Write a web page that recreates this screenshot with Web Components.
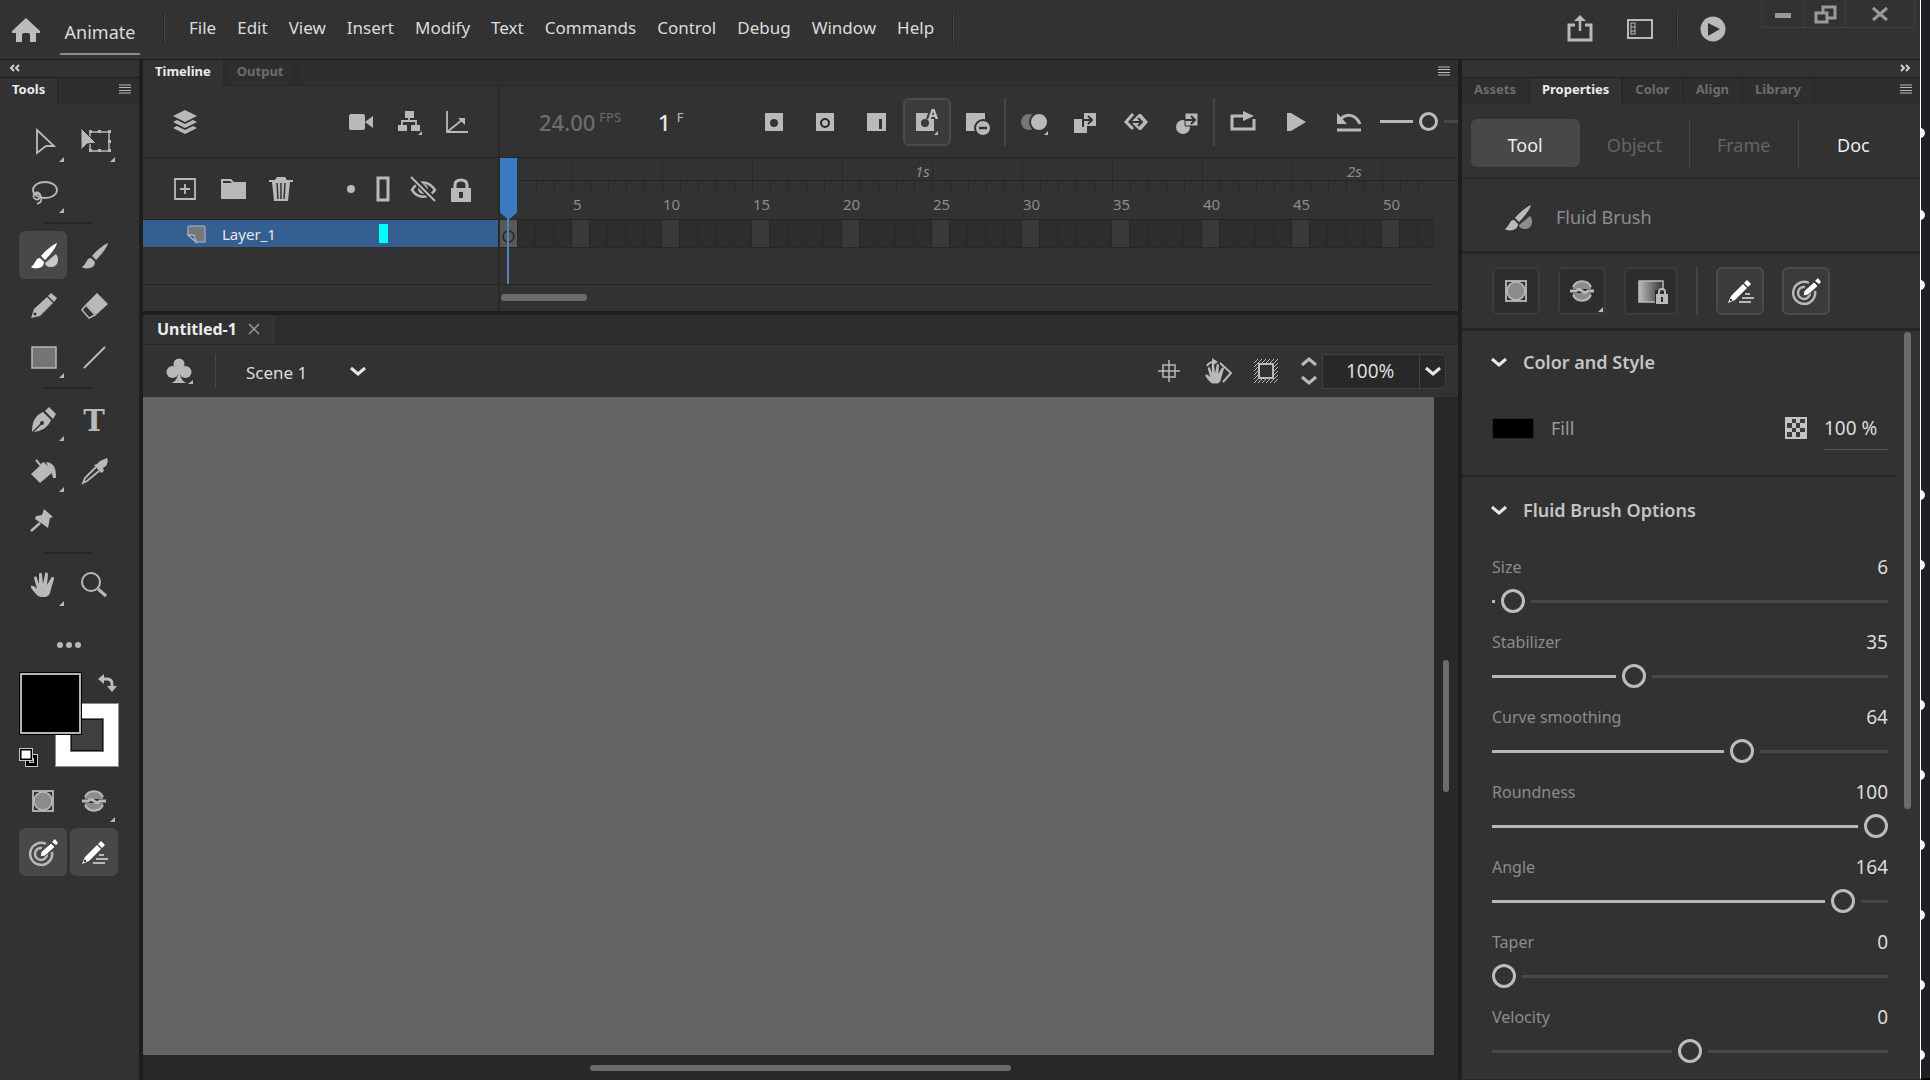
<!DOCTYPE html>
<html lang="en">
<head>
<meta charset="utf-8">
<title>Animate</title>
<style>
  html, body { height: 100%; }
  body {
    margin: 0;
    padding-bottom: 10px;
    box-sizing: border-box;
    background: #fff;
    color: #dcdcdc;
    font-family: "Noto Sans", "Open Sans", sans-serif;
    font-size: 17px;
    --panel: #323232;
    --tabs: #2e2e2e;
    --line: #262626;
    --gap: #1e1e1e;
    --icon: #b9b9b9;
  }
</style>
</head>
<body>
<animate-app></animate-app>

<script>
// Base styles that every shadow root needs
const BASE = `
  * { box-sizing: border-box; }
  button, input, select {
    font: inherit; color: inherit; background: none; border: 0; margin: 0; padding: 0;
    appearance: none; -webkit-appearance: none; outline: none;
  }
  button { cursor: pointer; display: flex; align-items: center; justify-content: center; }
`;

const MORE = '<path d="M21 16V21H16Z"/>';
const BRUSH = '<path d="M14-12C9-10 1-3-2 1L2 5C6 1 13-7 14-12Z"/><path d="M-3 3C-8 3-7 9-12 12-11 14 1 15 1 7Z"/>';
const PENCIL = '<path d="M-12 12-9 3 4-9 10-3-3 10Z"/><path d="M5-10 8-13 14-8 11-4Z"/>';

// Every icon is drawn round the point 0,0
const ICONS = {
  home: '<path d="M0-12 14 1V3H10V12H4V5Q4 3 2 3H-2Q-4 3-4 5V12H-10V3H-14V1Z"/>',
  share: '<path class="s" stroke-width="3" d="M-5-4H-11V11H11V-4H5"/><path class="s" stroke-width="2.500" d="M0 2V-9"/><path d="M-6-8 0-14 6-8Z"/>',
  workspace: '<rect class="s" stroke-width="2" x="-12" y="-9" width="24" height="18"/><rect class="s" x="-9" y="-6" width="4" height="11"/><path class="s" d="M-9-2H-5M-9 2H-5"/>',
  playCircle: '<path fill-rule="evenodd" d="M0-12.500A12.500 12.500 0 1 1 0 12.500 12.500 12.500 0 1 1 0-12.500ZM-5-6V7L7 0Z"/>',
  minimise: '<rect x="-8" y="-1" width="16" height="5"/>',
  restore: '<g class="s" stroke-width="3"><rect x="-9" y="-1" width="11" height="9"/><path d="M-2-2V-7H10V4H3"/></g>',
  closeWin: '<path class="s" stroke-width="3" d="M-7-6 7 6M7-6-7 6"/>',
  left: '<path class="s" stroke-width="2" d="M-1-3-4 0-1 3M4-3 1 0 4 3"/>',
  right: '<path class="s" stroke-width="2" d="M-4-3-1 0-4 3M1-3 4 0 1 3"/>',
  menu: '<path class="s" d="M-6-4H6M-6-1.500H6M-6 1.500H6M-6 4H6"/>',
  select: '<path class="s" stroke-width="1.800" d="M-6-11 11 5H3L-6 12Z"/>' + MORE,
  transform: '<g class="s" stroke-width="1.500"><path d="M-4-9H15V10H-4Z"/></g><path d="M-13-13V9L-7 3 2 2Z" stroke="#323232"/><path d="M-5 8h3v3h-3zM4 8h3v3H4zM14 8h3v3h-3zM14-1h3v3h-3zM14-11h3v3h-3zM4-11h3v3H4zM-5-11h3v3h-3z"/>' + MORE,
  lasso: '<g class="s" stroke-width="1.800"><ellipse cx="2" cy="-2" rx="12" ry="8"/><circle cx="-6" cy="4" r="3.500"/><path d="M-8 3Q-4 0-2 5T-6 12"/></g>' + MORE,
  fluid: '<g fill="#fff">' + BRUSH + '</g><path fill="#c8c8c8" d="M13-1C17 4 15 12 8 12 4 12 2 10 2 8Z"/>',
  fluidDim: BRUSH + '<path fill="#8c8c8c" d="M13-1C17 4 15 12 8 12 4 12 2 10 2 8Z"/>',
  brush: BRUSH,
  pencil: PENCIL + '<circle cx="-8" cy="8" r="1.500" fill="#323232"/>',
  eraser: '<path d="M3-13 14-2 2 9-8-2Z"/><path class="s" stroke-width="1.500" d="M-8-1-12 4-5 12 1 9Z"/>',
  rect: '<rect x="-11" y="-10" width="24" height="21" fill="#757575" stroke="currentColor" stroke-width="1.500"/>' + MORE,
  line: '<path class="s" stroke-width="2" d="M-10 11 11-10"/>',
  pen: '<path d="M-11 12C-11 3-9-4 0-8L8 0C5 8-2 11-9 12Z"/><path fill="none" stroke="#323232" stroke-width="1.500" d="M-11 13-2 4"/><circle cx="-1" cy="3" r="2" fill="#323232"/><path d="M2-9 6-13 13-6 10-1Z"/>' + MORE,
  type: '<text x="0" y="11" text-anchor="middle" font-family="DejaVu Serif" font-weight="bold" font-size="29">T</text>',
  bucket: '<path d="M-12 3 1-9 10 1-3 12Z"/><path class="s" stroke-width="2" d="M-7-11-1-4M-1-8 4-4"/><path d="M3-9C12-8 13-2 13 7H10C9 2 8 0 6-2Z"/>' + MORE,
  dropper: '<path d="M3-7 6-10 13-13Q15-10 12-5L9-3 10 0 7 2 0-6Z"/><path class="s" stroke-width="1.800" d="M2-4-9 7-11 12-7 10 5 0"/>',
  pin: '<path d="M1-13 10-5 7-4 5 6 1 3-8-3-7-6-1-7Z"/><path class="s" stroke-width="2.500" d="M-3 1-12 9"/>',
  hand: '<path d="M-5 11C-7 9-13 3-12 1-11 0-8 1-6 4L-9-7C-9-9-6-9-6-7L-4-1-4-10C-4-13-1-13-1-10L0-1 2-11C2-13 5-13 5-10L4 0 8-7C9-9 12-8 11-6L8 4C7 10 5 12 1 12-2 12-3 12-5 11Z"/>',
  zoom: '<circle class="s" stroke-width="2" cx="-3" cy="-3" r="9"/><path class="s" stroke-width="3" d="M4 4 12 11"/>',
  dots: '<circle cx="-9" r="3"/><circle r="3"/><circle cx="9" r="3"/>',
  swap: '<path class="s" stroke-width="3" d="M-5-4H-1Q4-4 4 1V4"/><path d="M-10-4-4-9V1Z"/><path d="M-1 3H9L4 9Z"/>',
  reset: '<rect x="-3" y="-3" width="12" height="12" fill="#000" stroke="#c8c8c8"/><rect x="1" y="1" width="4" height="4" fill="#323232" stroke="#c8c8c8"/><rect x="-9" y="-9" width="13" height="12" fill="#000" stroke="#c8c8c8"/><rect x="-7" y="-7" width="9" height="8" fill="#fff"/>',
  object: '<rect class="s" stroke-width="1.800" x="-10" y="-10" width="20" height="20"/><circle r="9" fill="#8c8c8c" stroke="currentColor" stroke-width="1.500"/>',
  paint: '<path fill="#8c8c8c" d="M-9-4A10 10 0 0 1 9-4L9-2H-9ZM-9 4A10 10 0 0 0 9 4V2H-9Z"/><path class="s" stroke-width="2" d="M-9-4A10 10 0 0 1 9-4M-9 4A10 10 0 0 0 9 4"/><path class="s" stroke-width="3" d="M-12 0H-6Q-3-3 0 0T6 0H12"/>' + MORE,
  gradient: '<defs><linearGradient id="g"><stop offset="0" stop-color="#bbb"/><stop offset="1" stop-color="#333"/></linearGradient></defs><rect x="-12" y="-10" width="24" height="21" fill="url(#g)" stroke="currentColor" stroke-width="1.500"/><rect x="4" y="-1" width="14" height="15" fill="#2c2c2c"/><rect x="5" y="3" width="12" height="10"/><path class="s" stroke-width="2" d="M8 4V1Q8-2 11-2T14 1V4"/><path fill="#2c2c2c" d="M10 6h2v5h-2z"/>',
  stroke: '<path fill="#fff" d="M-12 12-9 5 3-7 7-3-5 9Z"/><path fill="#fff" d="M4-8 7-11 11-7 8-4Z"/><circle cx="-9" cy="9" r="1.200" fill="#3c3c3c"/><path class="s" stroke-width="2" d="M5 3H10M2 7H14M-1 11H11"/>',
  target: '<g class="s" stroke-width="2.500"><path d="M3-8A11 11 0 1 0 9 0"/><path d="M-1-4A6 6 0 1 0 4 2"/></g><path fill="#fff" stroke="#444" d="M-3 5-2 0 8-9 12-5 2 4Z"/><path fill="#fff" d="M9-10 12-13 15-9 13-7Z"/>',
  layers: '<path d="M0-12 12-6 0 0-12-6ZM-12 0-8-2 0 2 8-2 12 0 0 6ZM-12 6-8 4 0 8 8 4 12 6 0 12Z"/>',
  camera: '<rect x="-12" y="-8" width="16" height="16" rx="2"/><path d="M4 0 12-6V6Z"/>',
  tree: '<path d="M-4-11h9v7h-9zM-11 3h9v6h-9zM2 3h9v6H2z"/><path class="s" stroke-width="1.800" d="M0-5V-1M-7 3V-1H7V3"/><path d="M13 9V13H9Z"/>',
  graph: '<path class="s" stroke-width="1.800" d="M-10-11V10H11M-10 10 5-2"/><path d="M1-4H8V3Z"/>',
  key: '<path fill-rule="evenodd" d="M-9-9H9V9H-9ZM0-3A4 4 0 1 0 0 5 4 4 0 1 0 0-3Z"/>',
  blank: '<rect x="-9" y="-9" width="18" height="18"/><circle cy="1" r="4" fill="none" stroke="#262626" stroke-width="2"/>',
  frame: '<path fill-rule="evenodd" d="M-9-9H10V9H-9ZM3-3V7H6V-3Z"/>',
  auto: '<path fill-rule="evenodd" d="M-11-9H1L-1-3H7V9H-11ZM-2-3A4 4 0 1 0-2 5 4 4 0 1 0-2-3Z"/><text x="6" y="-3" text-anchor="middle" font-size="14" font-weight="bold" fill="#c8c8c8">A</text><path d="M11 9V13H7Z"/>',
  remove: '<rect x="-12" y="-9" width="19" height="18"/><circle cx="5" cy="6" r="8" stroke="#323232" stroke-width="2"/><path stroke="#323232" stroke-width="2.500" d="M1 6H9"/>',
  onion: '<circle cx="-5" r="8" fill="#777"/><circle cx="5" r="9" stroke="#323232" stroke-width="2"/><path d="M14 9V13H10Z"/>',
  tween: '<path d="M-11-3H-3V4H2V11H-11Z"/><path d="M-2-9H11V4H-2Z"/><path stroke="#323232" stroke-width="2" fill="none" d="M-2-9V4H-3M-3-2H6M3-6 7-2 3 2"/>',
  motion: '<path class="s" stroke-width="3" d="M-3-8-10 0-3 7"/><path d="M-5 0 3-8H5L12 0 5 8H3Z"/><path fill="none" stroke="#323232" stroke-width="2" d="M-5 0H5M2-4 6 0 2 4"/>',
  shape: '<circle cx="-4" cy="5" r="7"/><path d="M-2-9H11V4H-2Z" stroke="#323232"/><path stroke="#323232" stroke-width="2" fill="none" d="M-2-2H7M4-6 8-2 4 2"/>',
  loop: '<path class="s" stroke-width="3" d="M1-6H-11V7H11V-3"/><path d="M0-11 11-6 0-1Z"/>',
  play: '<path d="M-9-9H-5L10 0-5 9H-9Z"/>',
  undo: '<path class="s" stroke-width="3" d="M-10-1C-4-9 6-9 11 2"/><path d="M-12-9V2H-2Z"/><path class="s" stroke-width="3" d="M-12 8H12"/>',
  addLayer: '<path class="s" stroke-width="1.800" d="M-10-10H10V10H-10ZM0-5V5M-5 0H5"/>',
  folder: '<path d="M-12-10H-2L1-7H13V10H-12ZM-10-6H-1L-3-8H-10Z" fill-rule="evenodd"/>',
  trash: '<path fill-rule="evenodd" d="M-4-12H4L6-9H12V-7H9L7 12H-7L-9-7H-12V-9H-6Z"/><path stroke="#323232" stroke-width="1.500" fill="none" d="M-4-6-3 10M0-6V10M4-6 3 10"/>',
  dot: '<circle r="4"/>',
  outline: '<rect class="s" stroke-width="3" x="-5" y="-11" width="10" height="22"/>',
  eye: '<path class="s" stroke-width="2.500" d="M-11 1C-5-9 5-9 12 1 5 10-5 10-11 1Z"/><circle r="5"/><path stroke="#323232" stroke-width="6" d="M-10-11 12 12"/><path class="s" stroke-width="2" d="M-12-12 12 12"/>',
  lock: '<path fill-rule="evenodd" d="M-10-1H10V13H-10ZM-2 3V9H2V3Z"/><path class="s" stroke-width="3" d="M-6 0V-4Q-6-9 0-9T6-4V0"/>',
  layer: '<path fill="#777" stroke="#8fa3bb" stroke-width="1.500" d="M-6-8H7Q9-8 9-6V8H0L-8 1V-6Q-8-8-6-8Z"/><path fill="#365f91" stroke="#9fb0c4" stroke-width="1.500" d="M-8 1H-2L0 8Z"/>',
  close: '<path class="s" stroke-width="1.500" d="M-5-5 5 5M5-5-5 5"/>',
  club: '<circle cy="-7" r="5.500"/><circle cx="-6.500" cy="1" r="6"/><circle cx="6.500" cy="1" r="6"/><path d="M-3-4H3L4 3H1C2 8 4 11 8 12H-8C-4 11-2 8-1 3H-4Z"/><path d="M14 9V13H9Z"/>',
  centre: '<path class="s" stroke-width="1.500" d="M-6-6H6V6H-6ZM0-11V11M-11 0H11"/>',
  rotate: '<g transform="translate(-3 3) scale(.8)"><path d="M-5 11C-7 9-13 3-12 1-11 0-8 1-6 4L-9-7C-9-9-6-9-6-7L-4-1-4-10C-4-13-1-13-1-10L0-1 2-11C2-13 5-13 5-10L4 0 8-7C9-9 12-8 11-6L8 4C7 10 5 12 1 12-2 12-3 12-5 11Z"/></g><path class="s" stroke-width="2" d="M2-8 13 2 5 11M-11-5Q-9-9-4-9"/><path d="M-6-13 0-9-6-5Z"/>',
  clip: '<g class="s"><path d="M-12-8-8-12M-12-4-4-12M-12 0 0-12M-12 4-8 0M-12 8-8 4M-12 12-8 8M-8 12-4 8M-4 12 0 8M0 12 12 0M4 12 12 4M8 12 12 8M0-8 4-12M4-8 8-12M8-8 12-12M8-4 12-8M8 0 12-4M8 4 12 0"/></g><rect x="-7" y="-7" width="14" height="14" fill="#323232" stroke="currentColor" stroke-width="2"/>',
  stepper: '<path class="s" stroke-width="3" d="M-7-6 0-12 7-6M-7 6 0 12 7 6"/>',
  chevron: '<path fill="none" stroke="#e6e6e6" stroke-width="3" d="M-7-3 0 3 7-3"/>',
  alpha: '<path fill="#c4c4c4" d="M-11-11H11V11H-11Z"/><path fill="#3c3c3c" d="M-4-9h4v4h-4zM4-9h5v4H4zM-9-5h5v5h-5zM0-5h4v5H0zM-4 0h4v4h-4zM4 0h5v4H4zM-9 4h5v5h-5zM0 4h4v5H0z"/>'
};
ICONS.handTool = ICONS.hand + MORE;

class SvgIcon extends HTMLElement {
  connectedCallback() {
    const size = Number(this.getAttribute('size') || 24);
    if (!this.shadowRoot) this.attachShadow({ mode: 'open' });
    this.shadowRoot.innerHTML = `
      <style>
        :host { display: block; flex: none; width: ${size}px; height: ${size}px; }
        svg { display: block; overflow: visible; fill: currentColor; }
        .s { fill: none; stroke: currentColor; }
      </style>
      <svg width="${size}" height="${size}" viewBox="${-size / 2} ${-size / 2} ${size} ${size}" aria-hidden="true">${ICONS[this.getAttribute('name')]}</svg>
    `;
  }
}
customElements.define('svg-icon', SvgIcon);

// A square icon button. kind: empty, "on" (filled) or "boxed" / "boxed on" (with a frame)
class ToolButton extends HTMLElement {
  constructor() {
    super();
    this.attachShadow({ mode: 'open' });
  }
  connectedCallback() {
    const icon = this.getAttribute('icon');
    this.shadowRoot.innerHTML = `
      <style>
        ${BASE}
        :host { display: block; flex: none; width: var(--w, 48px); height: var(--h, 48px); color: var(--icon); }
        button { width: 100%; height: 100%; border-radius: 6px; }
        :host([kind~="on"]) button { background: #484848; }
        :host([kind~="boxed"]) button { border: 2px solid #3c3c3c; background: #2d2d2d; }
        :host([kind="boxed on"]) button { border-color: #4b4b4b; background: #3b3b3b; }
      </style>
      <button type="button" aria-label="${icon}"><svg-icon name="${icon}"></svg-icon></button>
    `;
  }
}
customElements.define('tool-button', ToolButton);

class PanelTabs extends HTMLElement {
  constructor() {
    super();
    this.attachShadow({ mode: 'open' });
  }
  connectedCallback() {
    const active = this.getAttribute('active');
    const tabs = this.getAttribute('tabs').split(',');
    this.shadowRoot.innerHTML = `
      <style>
        ${BASE}
        :host { display: flex; height: 26px; background: var(--tabs); font-size: 13px; font-weight: bold; color: #6c6c6c; }
        .tab { padding: 0 12px 4px; border-right: 2px solid #292929; border-bottom: 1px solid #292929; line-height: 20px; }
        .tab.active { background: var(--panel); color: #ececec; border-bottom-color: var(--panel); }
        .rest { flex: 1; display: flex; justify-content: flex-end; padding: 0 6px 3px; border-bottom: 1px solid #292929; color: var(--icon); }
      </style>
      ${tabs.map(t => `<button type="button" class="tab ${t === active ? 'active' : ''}">${t}</button>`).join('')}
      <div class="rest"><button type="button" aria-label="Panel menu"><svg-icon name="menu" size="16"></svg-icon></button></div>
    `;
  }
}
customElements.define('panel-tabs', PanelTabs);

class CollapseBar extends HTMLElement {
  constructor() {
    super();
    this.attachShadow({ mode: 'open' });
  }
  connectedCallback() {
    this.shadowRoot.innerHTML = `
      <style>
        ${BASE}
        :host { display: flex; height: 18px; padding: 0 7px 2px; border-bottom: 1px solid var(--gap); box-sizing: border-box; color: #d0d0d0; }
        :host([side="right"]) { justify-content: flex-end; }
      </style>
      <button type="button" aria-label="Collapse"><svg-icon size="16" name="${this.getAttribute('side') || 'left'}"></svg-icon></button>
    `;
  }
}
customElements.define('collapse-bar', CollapseBar);

class AppHeader extends HTMLElement {
  constructor() {
    super();
    const menus = ['File', 'Edit', 'View', 'Insert', 'Modify', 'Text', 'Commands', 'Control', 'Debug', 'Window', 'Help'];
    this.attachShadow({ mode: 'open' }).innerHTML = `
      <style>
        ${BASE}
        :host { display: flex; align-items: flex-start; height: 60px; box-sizing: border-box; background: var(--panel); border-bottom: 1px solid var(--gap); }
        .home { padding: 18px 0 0 14px; color: #bcbcbc; }
        .app { margin-left: 22px; width: 80px; height: 55px; padding: 10px 0 0; border-bottom: 2px solid #8c8c8c; font-size: 18px; }
        .sep { width: 2px; height: 32px; margin-top: 12px; background: #272727; border-right: 1px solid #444; }
        nav { display: flex; gap: 21px; margin: 0 18px 0 24px; height: 54px; }
        .right { margin-left: auto; display: flex; color: var(--icon); }
        .right > button { height: 58px; width: 24px; }
        .win { display: flex; width: 154px; height: 28px; margin: 0 5px 0 36px; border: 1px solid #3e3e3e; border-top: 0; color: #9a9a9a; }
        .win button { width: 41px; border-right: 1px solid #3e3e3e; }
        .win button:first-child { width: 43px; }
        .win button:last-child { flex: 1; border: 0; }
      </style>
      <button type="button" class="home" aria-label="Home"><svg-icon name="home"></svg-icon></button>
      <button type="button" class="app">Animate</button>
      <div class="sep" style="margin-left: 23px"></div>
      <nav>${menus.map(m => `<button type="button">${m}</button>`).join('')}</nav>
      <div class="sep"></div>
      <div class="right">
        <button type="button" aria-label="Share"><svg-icon name="share"></svg-icon></button>
        <button type="button" aria-label="Workspace" style="margin: 0 24px 0 36px"><svg-icon name="workspace"></svg-icon></button>
        <div class="sep"></div>
        <button type="button" aria-label="Test movie" style="margin-left: 23px"><svg-icon name="playCircle"></svg-icon></button>
        <div class="win">
          <button type="button" aria-label="Minimise"><svg-icon name="minimise"></svg-icon></button>
          <button type="button" aria-label="Restore"><svg-icon name="restore"></svg-icon></button>
          <button type="button" aria-label="Close"><svg-icon name="closeWin"></svg-icon></button>
        </div>
      </div>
    `;
  }
}
customElements.define('app-header', AppHeader);

class ColorSwatches extends HTMLElement {
  constructor() {
    super();
    this.attachShadow({ mode: 'open' }).innerHTML = `
      <style>
        ${BASE}
        :host { display: block; position: relative; width: 100px; height: 95px; color: #bcbcbc; }
        button { position: absolute; }
        .stroke { right: 0; bottom: 0; width: 64px; height: 64px; background: #fff; border: 1px solid #8c8c8c; }
        .stroke span { width: 32px; height: 32px; background: #404040; border: 1px solid #111; outline: 1px solid #777; }
        .fill { left: 0; top: 0; width: 63px; height: 63px; background: #000; border: 1px solid #000; box-shadow: inset 0 0 0 2px #b4b4b4; }
        .swap { right: 0; top: 0; }
        .reset { left: 0; bottom: 0; }
      </style>
      <button type="button" class="stroke" aria-label="Stroke color"><span></span></button>
      <button type="button" class="fill" aria-label="Fill color"></button>
      <button type="button" class="swap" aria-label="Swap"><svg-icon name="swap" size="22"></svg-icon></button>
      <button type="button" class="reset" aria-label="Default colors"><svg-icon name="reset" size="19"></svg-icon></button>
    `;
  }
}
customElements.define('color-swatches', ColorSwatches);

class ToolsPanel extends HTMLElement {
  constructor() {
    super();
    const groups = [
      ['select', 'transform', 'lasso'],
      ['fluid', 'brush', 'pencil', 'eraser', 'rect', 'line'],
      ['pen', 'type', 'bucket', 'dropper', 'pin'],
      ['handTool', 'zoom']
    ];
    const tool = n => `<tool-button icon="${n}" ${n === 'fluid' ? 'kind="on"' : ''}></tool-button>`;
    this.attachShadow({ mode: 'open' }).innerHTML = `
      <style>
        :host { display: block; background: var(--panel); }
        .body { padding: 13px 0 0 19px; }
        .group { display: grid; grid-template-columns: 48px 48px; gap: 3px; }
        hr { width: 48px; height: 2px; margin: 6px 0 7px 25px; border: 0; background: #262626; }
        .dots { --w: 99px; --h: 24px; margin: 24px 0 15px; }
        color-swatches { margin-bottom: 10px; }
      </style>
      <collapse-bar></collapse-bar>
      <panel-tabs tabs="Tools" active="Tools"></panel-tabs>
      <div class="body">
        ${groups.map(g => `<div class="group">${g.map(tool).join('')}</div>`).join('<hr>')}
        <tool-button class="dots" icon="dots"></tool-button>
        <color-swatches></color-swatches>
        <div class="group">
          <tool-button icon="object"></tool-button>
          <tool-button icon="paint"></tool-button>
          <tool-button icon="target" kind="on"></tool-button>
          <tool-button icon="stroke" kind="on"></tool-button>
        </div>
      </div>
    `;
  }
}
customElements.define('tools-panel', ToolsPanel);

// Range input with a ring for its thumb and a gap in the track on both sides of it
class RingSlider extends HTMLElement {
  constructor() {
    super();
    this.attachShadow({ mode: 'open' });
  }
  connectedCallback() {
    const min = Number(this.getAttribute('min') || 0);
    const max = Number(this.getAttribute('max') || 100);
    const value = Number(this.getAttribute('value') || 0);
    const part = min < 0 ? 0 : (value - min) / (max - min);
    const label = this.getAttribute('label');
    this.shadowRoot.innerHTML = `
      <style>
        ${BASE}
        :host { display: block; --ring: 24px; }
        .top { display: flex; justify-content: space-between; height: 30px; line-height: 30px; margin-bottom: 7px; }
        label { color: #8c8c8c; font-size: 16px; }
        output { color: #dcdcdc; font-size: 19px; }
        input { display: block; width: 100%; height: var(--ring); }
        input::-webkit-slider-runnable-track {
          height: 3px;
          background: linear-gradient(to right, #b8b8b8 calc(${part} * 100%), #484848 calc(${part} * 100%));
        }
        input::-webkit-slider-thumb {
          -webkit-appearance: none;
          width: var(--ring); height: var(--ring);
          margin-top: calc((3px - var(--ring)) / 2);
          border: 3px solid #bcbcbc; border-radius: 50%;
          background: var(--panel);
          box-shadow: 0 0 0 6px var(--panel);
        }
        :host([bare]) .top { display: none; }
        :host([bare]) { --ring: 19px; }
      </style>
      <div class="top"><label for="r">${label}</label><output for="r">${this.hasAttribute('bare') ? '' : value}</output></div>
      <input id="r" type="range" min="${min}" max="${max}" value="${value}" aria-label="${label}">
    `;
  }
}
customElements.define('ring-slider', RingSlider);

const FRAMES = 52;

class FrameRuler extends HTMLElement {
  constructor() {
    super();
    let seconds = '', ticks = '', cells = '';
    for (let i = 1; i <= FRAMES; i++) {
      const five = i % 5 === 0 ? 'five' : '';
      seconds += `<i class="${five}">${i % 24 === 0 ? i / 24 + 's' : ''}</i>`;
      ticks += `<span class="${five}${i < 3 ? ' no' : ''}">${five ? `<b>${i}</b>` : ''}</span>`;
      cells += `<span class="${five}${i === 1 ? ' first' : ''}"></span>`;
    }
    this.attachShadow({ mode: 'open' }).innerHTML = `
      <style>
        * { box-sizing: border-box; }
        :host { display: block; position: relative; min-width: 0; overflow: hidden; font-size: 15px; color: #8c8c8c; }
        .row { display: flex; }
        .row > * { flex: none; width: 18px; white-space: nowrap; }
        .seconds { height: 23px; border-bottom: 1px solid var(--line); }
        .seconds i { line-height: 26px; border-left: 1px solid transparent; }
        .seconds i.five { border-color: #292929; }
        .ticks { height: 38px; }
        .ticks span { height: 12px; border-left: 1px solid #272727; }
        .ticks .no { border-color: transparent; }
        b { display: block; font-weight: normal; line-height: 20px; padding-top: 13px; }
        .cells { height: 29px; margin-right: 24px; overflow: hidden; border-top: 1px solid var(--line); border-bottom: 1px solid #272727; background: #2d2d2d; }
        .cells span { border-right: 1px solid #272727; }
        .cells .five { background: #393939; }
        .cells .first { background: #595959; display: flex; align-items: center; justify-content: center; padding-top: 5px; }
        .cells .first::after { content: ""; width: 9px; height: 9px; border: 2px solid #303030; border-radius: 50%; }
        .blank { height: 37px; margin-right: 24px; border-bottom: 1px solid var(--line); }
        .bar { padding: 9px 1px; height: 26px; }
        .bar div { width: 86px; height: 7px; border-radius: 4px; background: #6c6c6c; }
        .head { position: absolute; left: 0; top: 0; width: 17px; height: 62px; background: #3a7bc3; clip-path: polygon(0 0, 100% 0, 100% 88%, 50% 100%, 0 88%); }
        .needle { position: absolute; left: 7px; top: 61px; width: 2px; height: 65px; background: #4e86ba; }
      </style>
      <div class="row seconds">${seconds}</div>
      <div class="row ticks">${ticks}</div>
      <div class="row cells">${cells}</div>
      <div class="blank"></div>
      <div class="bar"><div></div></div>
      <div class="head"></div><div class="needle"></div>
    `;
  }
}
customElements.define('frame-ruler', FrameRuler);

class TimelinePanel extends HTMLElement {
  constructor() {
    super();
    const btn = n => `<tool-button icon="${n}" ${n === 'auto' ? 'kind="boxed on"' : ''}></tool-button>`;
    this.attachShadow({ mode: 'open' }).innerHTML = `
      <style>
        * { box-sizing: border-box; }
        :host { display: block; background: var(--panel); }
        .grid { display: grid; grid-template-columns: 357px minmax(0, 1fr); }
        .left { border-right: 2px solid #292929; }
        .tools { display: flex; align-items: center; height: 72px; border-bottom: 1px solid var(--line); overflow: hidden; }
        .left .tools, .heads { --w: 24px; --h: 24px; padding-left: 30px; }
        .fps { display: flex; width: 250px; flex: none; padding-left: 39px; font-size: 22px; font-weight: 500; line-height: 30px; color: #6c6c6c; }
        .fps sup { font-size: 13px; font-weight: normal; line-height: 20px; margin-left: 4px; }
        .fps .now { color: #e6e6e6; margin-left: 37px; }
        .fps .now + sup { color: #bcbcbc; margin-left: 6px; }
        .set { display: flex; gap: 3px; }
        .set.playback { gap: 5px; }
        .sep { flex: none; width: 2px; height: 48px; background: #464646; margin: 0 4px 0 2px; }
        ring-slider { flex: none; width: 96px; margin-left: 7px; }
        .heads { display: flex; align-items: center; height: 61px; }
        .layer { display: flex; align-items: center; height: 28px; padding-left: 43px; font-size: 15px; background: #365f91; border-top: 1px solid var(--line); color: #e6e6e6; }
        .layer span { width: 157px; margin-left: 16px; }
        .layer div { width: 9px; height: 19px; background: #0ff; }
        .blank { height: 38px; border-bottom: 1px solid var(--line); }
      </style>
      <panel-tabs tabs="Timeline,Output" active="Timeline"></panel-tabs>
      <div class="grid">
        <div class="left">
          <div class="tools">
            <tool-button icon="layers"></tool-button>
            <tool-button icon="camera" style="margin-left: 152px"></tool-button>
            <tool-button icon="tree" style="margin-left: 24px"></tool-button>
            <tool-button icon="graph" style="margin-left: 24px"></tool-button>
          </div>
          <div class="heads">
            <tool-button icon="addLayer"></tool-button>
            <tool-button icon="folder" style="margin-left: 24px"></tool-button>
            <tool-button icon="trash" style="margin-left: 24px"></tool-button>
            <tool-button icon="dot" style="margin-left: 46px"></tool-button>
            <tool-button icon="outline" style="margin-left: 8px"></tool-button>
            <tool-button icon="eye" style="margin-left: 16px"></tool-button>
            <tool-button icon="lock" style="margin-left: 14px"></tool-button>
          </div>
          <div class="layer"><svg-icon name="layer" size="20"></svg-icon><span>Layer_1</span><div></div></div>
          <div class="blank"></div>
        </div>
        <div>
          <div class="tools">
            <div class="fps"><span>24.00</span><sup>FPS</sup><span class="now">1</span><sup>F</sup></div>
            <div class="set">${['key', 'blank', 'frame', 'auto', 'remove'].map(btn).join('')}</div>
            <div class="sep"></div>
            <div class="set">${['onion', 'tween', 'motion', 'shape'].map(btn).join('')}</div>
            <div class="sep"></div>
            <div class="set playback">${['loop', 'play', 'undo'].map(btn).join('')}</div>
            <ring-slider bare label="Frame size" value="50"></ring-slider>
          </div>
          <frame-ruler></frame-ruler>
        </div>
      </div>
    `;
  }
}
customElements.define('timeline-panel', TimelinePanel);

class StageView extends HTMLElement {
  constructor() {
    super();
    this.attachShadow({ mode: 'open' }).innerHTML = `
      <style>
        ${BASE}
        :host { display: grid; grid-template-rows: 30px 52px minmax(0, 1fr) 25px; background: var(--panel); min-height: 0; }
        .tabs { display: flex; background: #2d2d2d; border-bottom: 1px solid var(--line); }
        .doc { display: flex; align-items: center; gap: 9px; padding: 0 14px 2px; background: var(--panel); border-right: 1px solid #292929; font-size: 16px; font-weight: bold; color: #ececec; }
        .doc button { color: #9a9a9a; }
        .bar { display: flex; align-items: center; --w: 24px; --h: 24px; padding: 0 12px 0 24px; }
        .sep { width: 1px; height: 34px; margin-left: 24px; background: #464646; }
        .scene { display: flex; align-items: center; margin-left: 30px; }
        .scene select { width: 100px; padding-top: 2px; }
        .right { display: flex; align-items: center; margin-left: auto; }
        .zoom { display: flex; height: 35px; margin-left: 1px; border: 1px solid #424242; border-radius: 0 6px 6px 0; background: #282828; }
        .zoom input { width: 97px; padding-left: 23px; font-size: 19px; border-right: 1px solid #424242; }
        .zoom button { width: 25px; }
        .view { display: grid; grid-template-columns: minmax(0, 1fr) 24px; background: #282828; }
        .canvas { background: #636363; }
        .vbar { padding: 0 9px; display: flex; align-items: center; }
        .vbar div { width: 7px; height: 20%; border-radius: 4px; background: #6c6c6c; }
        .hbar { background: #282828; display: flex; justify-content: center; align-items: center; }
        .hbar div { width: 32%; height: 6px; border-radius: 3px; background: #6c6c6c; }
      </style>
      <div class="tabs"><div class="doc"><span>Untitled-1</span><button type="button" aria-label="Close"><svg-icon name="close" size="16"></svg-icon></button></div></div>
      <div class="bar">
        <tool-button icon="club"></tool-button>
        <div class="sep"></div>
        <div class="scene"><select aria-label="Scene"><option>Scene 1</option></select><svg-icon name="chevron"></svg-icon></div>
        <div class="right">
          <tool-button icon="centre"></tool-button>
          <tool-button icon="rotate" style="margin-left: 25px"></tool-button>
          <tool-button icon="clip" style="margin-left: 24px"></tool-button>
          <tool-button icon="stepper" style="margin-left: 19px"></tool-button>
          <div class="zoom"><input type="text" value="100%" aria-label="Zoom"><button type="button" aria-label="Zoom levels"><svg-icon name="chevron"></svg-icon></button></div>
        </div>
      </div>
      <div class="view"><div class="canvas"></div><div class="vbar"><div></div></div></div>
      <div class="hbar"><div></div></div>
    `;
  }
}
customElements.define('stage-view', StageView);

class PropSection extends HTMLElement {
  constructor() {
    super();
    this.attachShadow({ mode: 'open' });
  }
  connectedCallback() {
    this.shadowRoot.innerHTML = `
      <style>
        ${BASE}
        :host { display: block; padding: 0 7px 0 30px; }
        button { gap: 12px; height: 62px; font-size: 18px; font-weight: 600; color: #c4c4c4; }
        svg-icon { margin-left: -5px; }
      </style>
      <button type="button"><svg-icon name="chevron"></svg-icon>${this.getAttribute('heading')}</button>
      <slot></slot>
    `;
  }
}
customElements.define('prop-section', PropSection);

class PropertiesPanel extends HTMLElement {
  constructor() {
    super();
    this.attachShadow({ mode: 'open' }).innerHTML = `
      <style>
        ${BASE}
        :host { display: flex; flex-direction: column; min-height: 0; background: var(--panel); }
        .modes { display: grid; grid-template-columns: repeat(4, 1fr); height: 75px; padding: 15px 12px 0 9px; border-bottom: 2px solid #292929; font-size: 18px; color: #646464; }
        .modes button { height: 48px; border-right: 1px solid #464646; line-height: 30px; padding-top: 3px; }
        .modes button:first-child { background: #484848; color: #ececec; border-radius: 6px; }
        .modes button:last-child { color: #ececec; border: 0; }
        .name { display: flex; align-items: center; height: 75px; padding-left: 43px; gap: 27px; border-bottom: 3px solid var(--line); font-size: 18px; color: #8c8c8c; padding-top: 3px; }
        .name svg-icon { color: var(--icon); }
        .options { display: flex; align-items: center; height: 77px; padding-left: 30px; gap: 18px; border-bottom: 3px solid var(--line); }
        .options .wide { --w: 54px; }
        .options div { width: 2px; height: 48px; background: #464646; }
        .scroll { flex: 1; min-height: 0; display: grid; grid-template-columns: minmax(0, 1fr) 25px; overflow: hidden; border-bottom: 1px solid var(--line); }
        .list { min-height: 0; overflow: hidden; }
        .track { padding: 1px 9px; }
        .track div { width: 7px; height: 64%; border-radius: 4px; background: #6c6c6c; }
        .fill { display: flex; align-items: center; height: 44px; margin-top: 13px; }
        .swatch { width: 42px; height: 21px; background: #000; border: 1px solid #262626; border-radius: 2px; }
        .fill label { margin-left: 17px; font-size: 18px; color: #9a9a9a; }
        .fill svg-icon { margin-left: auto; }
        .fill input { width: 64px; height: 44px; margin-left: 17px; border-bottom: 1px solid #525252; font-size: 19px; }
        hr { height: 2px; border: 0; margin: 25px 0 2px; background: var(--line); }
        ring-slider { margin-bottom: 14px; }
        ring-slider:first-of-type { margin-top: 11px; }
      </style>
      <collapse-bar side="right"></collapse-bar>
      <panel-tabs tabs="Assets,Properties,Color,Align,Library" active="Properties"></panel-tabs>
      <div class="modes"><button type="button">Tool</button><button type="button">Object</button><button type="button">Frame</button><button type="button">Doc</button></div>
      <div class="name"><svg-icon name="fluidDim"></svg-icon>Fluid Brush</div>
      <div class="options">
        <tool-button icon="object" kind="boxed"></tool-button>
        <tool-button icon="paint" kind="boxed"></tool-button>
        <tool-button icon="gradient" kind="boxed" class="wide"></tool-button>
        <div></div>
        <tool-button icon="stroke" kind="boxed on"></tool-button>
        <tool-button icon="target" kind="boxed on"></tool-button>
      </div>
      <div class="scroll">
        <div class="list">
          <prop-section heading="Color and Style">
            <div class="fill"><button type="button" id="fill" class="swatch" aria-label="Fill color"></button><label for="fill">Fill</label><svg-icon name="alpha" size="22"></svg-icon><input type="text" value="100 %" aria-label="Alpha"></div>
          </prop-section>
          <hr>
          <prop-section heading="Fluid Brush Options">
            <ring-slider label="Size" max="256" value="6"></ring-slider>
            <ring-slider label="Stabilizer" value="35"></ring-slider>
            <ring-slider label="Curve smoothing" value="64"></ring-slider>
            <ring-slider label="Roundness" value="100"></ring-slider>
            <ring-slider label="Angle" max="180" value="164"></ring-slider>
            <ring-slider label="Taper" value="0"></ring-slider>
            <ring-slider label="Velocity" min="-100" value="0"></ring-slider>
          </prop-section>
        </div>
        <div class="track"><div></div></div>
      </div>
    `;
  }
}
customElements.define('properties-panel', PropertiesPanel);

// Narrow strip at the window's right edge, with its row of handles
class SideRail extends HTMLElement {
  constructor() {
    super();
    const dots = [133, 215, 285, 495, 565, 705, 775, 845, 915, 985, 1055];
    this.attachShadow({ mode: 'open' }).innerHTML = `
      <style>
        :host { display: block; overflow: hidden; background: #1e2023; border-left: 1px solid #fff; border-bottom: 2px solid #000; }
        svg { display: block; }
      </style>
      <svg width="9" height="1070" fill="#f2f2f2" aria-hidden="true">${dots.map(y => `<circle cx="-1" cy="${y}" r="5"/>`).join('')}</svg>
    `;
  }
}
customElements.define('side-rail', SideRail);

class AnimateApp extends HTMLElement {
  constructor() {
    super();
    this.attachShadow({ mode: 'open' }).innerHTML = `
      <style>
        :host { display: grid; grid-template-columns: minmax(0, 1fr) 10px; height: 100%; overflow: hidden; }
        .app { display: grid; grid-template-rows: 60px minmax(0, 1fr); min-height: 0; }
        .work { display: grid; grid-template-columns: 139px minmax(0, 1fr) 458px; column-gap: 4px; min-height: 0; background: var(--gap); }
        .middle { display: grid; grid-template-rows: auto minmax(0, 1fr); row-gap: 4px; min-height: 0; }
      </style>
      <div class="app">
        <app-header></app-header>
        <div class="work">
          <tools-panel></tools-panel>
          <div class="middle">
            <timeline-panel></timeline-panel>
            <stage-view></stage-view>
          </div>
          <properties-panel></properties-panel>
        </div>
      </div>
      <side-rail></side-rail>
    `;
  }
}
customElements.define('animate-app', AnimateApp);
</script>
</body>
</html>
